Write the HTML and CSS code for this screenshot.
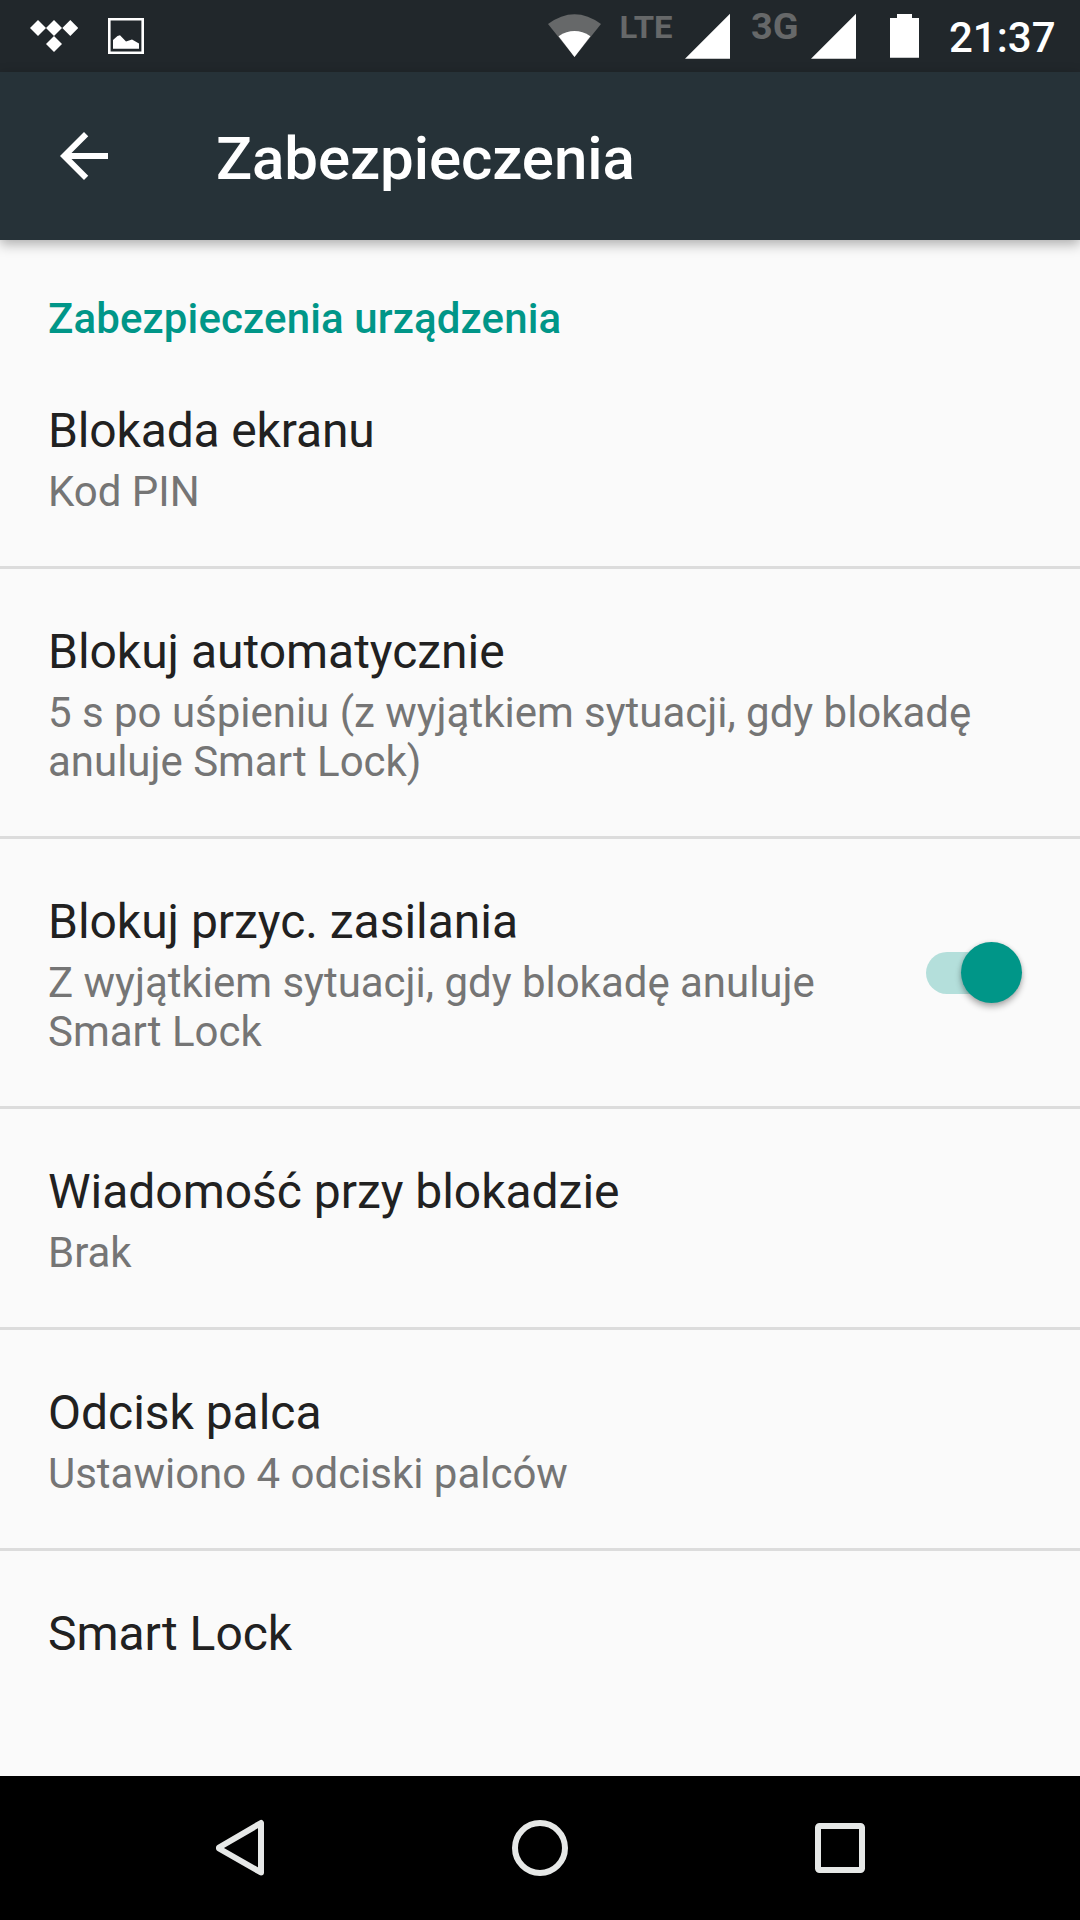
FILE: index.html
```html
<!DOCTYPE html>
<html lang="pl">
<head>
<meta charset="utf-8">
<title>Zabezpieczenia</title>
<link rel="stylesheet" href="styles.css">
</head>
<body>
<div class="screen">
  <header class="status-bar">
    <svg class="tidal" width="48" height="72" viewBox="30 0 48 72"><path fill="#fff" d="M38 20l8 8-8 8-8-8zM54 20l8 8-8 8-8-8zM70.300 20l8 8-8 8-8-8zM54 36l8 8-8 8-8-8z"/></svg>
    <svg class="picture" width="36" height="72" viewBox="108 0 36 72"><path fill="none" stroke="#fff" stroke-width="2.600" d="M109.300 19.300h33.400v33.400h-33.400z"/><path fill="#fff" d="M113 48.700V40l4.500-4 2.500-.8 6 6.400 6-2.200 7 4v5.300z"/></svg>
    <svg class="wifi" width="54" height="72" viewBox="548 0 54 72"><path fill="#666869" d="M548 24Q574.500 4.500 601 24L574.500 57z"/><path fill="#fff" d="M558.600 36.200Q574.500 26 590.400 36.200L574.500 57z"/></svg>
    <svg class="lte" width="52" height="72" viewBox="620 0 52 72"><text class="network" x="619.500" y="38" font-size="32" textLength="53" lengthAdjust="spacingAndGlyphs">LTE</text></svg>
    <svg class="signal-one" width="46" height="72" viewBox="685 0 46 72"><path fill="#fff" d="M685 58.700L730 13.700v45z"/></svg>
    <svg class="three-g" width="48" height="72" viewBox="751 0 48 72"><text class="network" x="751" y="38.500" font-size="36" textLength="47.500" lengthAdjust="spacingAndGlyphs">3G</text></svg>
    <svg class="signal-two" width="46" height="72" viewBox="811 0 46 72"><path fill="#fff" d="M811 58.700L856 13.700v45z"/></svg>
    <svg class="battery" width="30" height="72" viewBox="890 0 30 72"><path fill="#fff" d="M890 18h7v-4h15v4h7v39.700h-29z"/></svg>
    <span class="clock">21:37</span>
  </header>

  <div class="app-bar">
    <svg class="back" width="72" height="72" viewBox="0 0 24 24"><path fill="#fff" d="M20 11H7.830l5.590-5.590L12 4l-8 8 8 8 1.410-1.410L7.830 13H20v-2z"/></svg>
    <h1 class="app-title">Zabezpieczenia</h1>
  </div>

  <main class="content">
    <h2 class="section">Zabezpieczenia urządzenia</h2>
    <div class="row"><div class="label">
      <div class="title title-tight">Blokada ekranu</div>
      <div class="summary">Kod PIN</div>
    </div></div>
    <div class="row"><div class="label">
      <div class="title">Blokuj automatycznie</div>
      <div class="summary">5 s po uśpieniu (z wyjątkiem sytuacji, gdy blokadę anuluje Smart Lock)</div>
    </div></div>
    <div class="row"><div class="label">
      <div class="title">Blokuj przyc. zasilania</div>
      <div class="summary">Z wyjątkiem sytuacji, gdy blokadę anuluje Smart Lock</div>
    </div><div class="switch"><div class="thumb"></div></div></div>
    <div class="row"><div class="label">
      <div class="title">Wiadomość przy blokadzie</div>
      <div class="summary">Brak</div>
    </div></div>
    <div class="row"><div class="label">
      <div class="title">Odcisk palca</div>
      <div class="summary">Ustawiono 4 odciski palców</div>
    </div></div>
    <div class="row"><div class="label">
      <div class="title">Smart Lock</div>
    </div></div>
  </main>

  <nav class="nav-bar">
    <svg width="60" height="60" viewBox="210 1818 60 60"><path class="nav-line" stroke-linejoin="round" d="M261 1823v49.500L219 1848.500v-1z"/></svg>
    <svg width="60" height="60" viewBox="510 1818 60 60"><circle class="nav-line" cx="540" cy="1848" r="25"/></svg>
    <svg width="60" height="60" viewBox="810 1818 60 60"><rect class="nav-line" x="818" y="1826" width="44" height="44" rx="1.500"/></svg>
  </nav>
</div>
</body>
</html>
```
FILE: styles.css
```css
body {
  margin: 0;
  font-family: Roboto, sans-serif;
}
.screen {
  display: flex;
  flex-direction: column;
  width: 1080px;
  height: 1920px;
  overflow: hidden;
  background: #fafafa;
}
svg {
  display: block;
  flex: none;
}
.status-bar {
  display: flex;
  height: 72px;
  padding-left: 30px;
  background: #21272b;
}
.picture { margin-left: 30px; }
.wifi { margin-left: 404px; }
.lte { margin-left: 18px; overflow: visible; }
.signal-one { margin-left: 13px; }
.three-g { margin-left: 20px; overflow: visible; }
.signal-two { margin-left: 12px; }
.battery { margin-left: 33px; }
.network {
  fill: #666869;
  font-weight: 700;
}
.clock {
  margin-left: 29px;
  color: #fff;
  font-size: 42px;
  font-weight: 500;
  line-height: 76px;
}
.app-bar {
  display: flex;
  align-items: center;
  position: relative;
  height: 168px;
  padding-left: 48px;
  background: #263238;
  box-shadow: 0 4px 12px rgba(0, 0, 0, 0.32);
}
.app-title {
  margin: 6px 0 0 96px;
  color: #fff;
  font-size: 60px;
  font-weight: 500;
  line-height: 72px;
  letter-spacing: -0.09px;
}
.content {
  flex: 1;
  overflow: hidden;
}
.section {
  height: 50px;
  margin: 0;
  padding: 54px 48px 4px;
  color: #009688;
  font-size: 42px;
  font-weight: 500;
  line-height: 49px;
  letter-spacing: 0.13px;
}
.row {
  display: flex;
  align-items: center;
  padding: 51px 48px 50px;
  border-bottom: 3px solid #dcdcdc;
}
.row:last-child { border-bottom: 0; }
.label { flex: 1; }
.title {
  color: #212121;
  font-size: 48px;
  line-height: 64px;
  letter-spacing: -0.03px;
}
.title-tight { letter-spacing: -0.15px; }
.summary {
  margin-top: 4px;
  color: #757575;
  font-size: 42px;
  line-height: 49px;
  letter-spacing: -0.02px;
}
.switch {
  display: flex;
  align-items: center;
  justify-content: flex-end;
  width: 92px;
  height: 42px;
  margin: 0 14px 1px 40px;
  border-radius: 21px;
  background: #b4dfdb;
}
.thumb {
  flex: none;
  width: 61px;
  height: 61px;
  margin-right: -4px;
  border-radius: 50%;
  background: #009688;
  box-shadow: 0 4px 6px rgba(0, 0, 0, 0.3), 0 0 4px rgba(0, 0, 0, 0.1);
}
.nav-bar {
  display: flex;
  align-items: center;
  justify-content: center;
  gap: 240px;
  height: 144px;
  background: #000;
}
.nav-line {
  fill: none;
  stroke: #e6e8e7;
  stroke-width: 6px;
}
```
